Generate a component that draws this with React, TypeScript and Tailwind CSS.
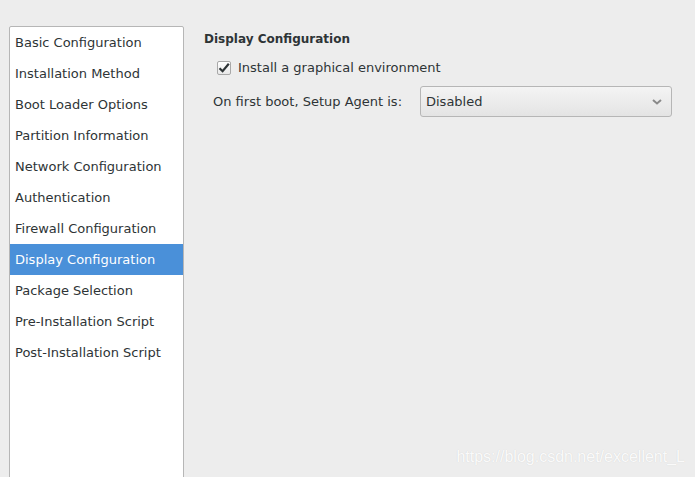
const items = [
  'Basic Configuration',
  'Installation Method',
  'Boot Loader Options',
  'Partition Information',
  'Network Configuration',
  'Authentication',
  'Firewall Configuration',
  'Display Configuration',
  'Package Selection',
  'Pre-Installation Script',
  'Post-Installation Script',
];

export default function App() {
  return (
    <div
      className="relative w-[695px] h-[477px] overflow-hidden bg-[#ededed] text-[#2e3436] text-[13px]"
      style={{ fontFamily: '"DejaVu Sans", sans-serif' }}
    >
      <div className="flex pt-[26px] pl-[9px] h-full">
        {/* Sidebar list */}
        <div className="w-[175px] shrink-0 h-[460px] bg-white border border-[#b6b6b6] rounded-t-[2px]">
          {items.map((it) => (
            <div
              key={it}
              className={
                it === 'Display Configuration'
                  ? 'h-[31px] flex items-center pl-[5px] bg-[#4a90d9] text-white'
                  : 'h-[31px] flex items-center pl-[5px]'
              }
            >
              {it}
            </div>
          ))}
        </div>

        {/* Right panel */}
        <div className="flex-1 pl-[20px] pt-[5px] pr-[23px]">
          <div className="font-bold text-[12px] h-[16px] leading-[16px]">Display Configuration</div>
          <div className="flex items-center mt-[13px] ml-[13px] h-[16px]">
            <div className="w-[14px] h-[14px] border border-[#a8a8a8] rounded-[2px] bg-gradient-to-b from-white to-[#e8e8e8] flex items-center justify-center">
              <svg width="12" height="12" viewBox="0 0 12 12">
                <path d="M1.5 6.2 L4.6 9.2 L10.8 1.8" fill="none" stroke="#2e3436" strokeWidth="2.2" />
              </svg>
            </div>
            <span className="ml-[7px]">Install a graphical environment</span>
          </div>
          <div className="flex items-center mt-[10px] ml-[9px]">
            <span className="w-[207px]">On first boot, Setup Agent is:</span>
            <div className="flex-1 h-[31px] border border-[#b6b6b6] rounded-[3px] bg-gradient-to-b from-[#f4f4f4] to-[#e4e4e4] flex items-center justify-between pl-[5px] pr-[8px] pt-[1px]">
              <span>Disabled</span>
              <svg width="12" height="8" viewBox="0 0 12 8">
                <path d="M2 2 L6 5.5 L10 2" fill="none" stroke="#8a8a8a" strokeWidth="2" />
              </svg>
            </div>
          </div>
        </div>
      </div>

      {/* watermark */}
      <div
        className="absolute right-[10px] bottom-[8px] text-[16px] text-white/90 [text-shadow:0_0_1px_rgba(0,0,0,0.15)]"
        style={{ fontFamily: '"Liberation Sans", Arial, sans-serif' }}
      >
        https://blog.csdn.net/excellent_L
      </div>
    </div>
  );
}
